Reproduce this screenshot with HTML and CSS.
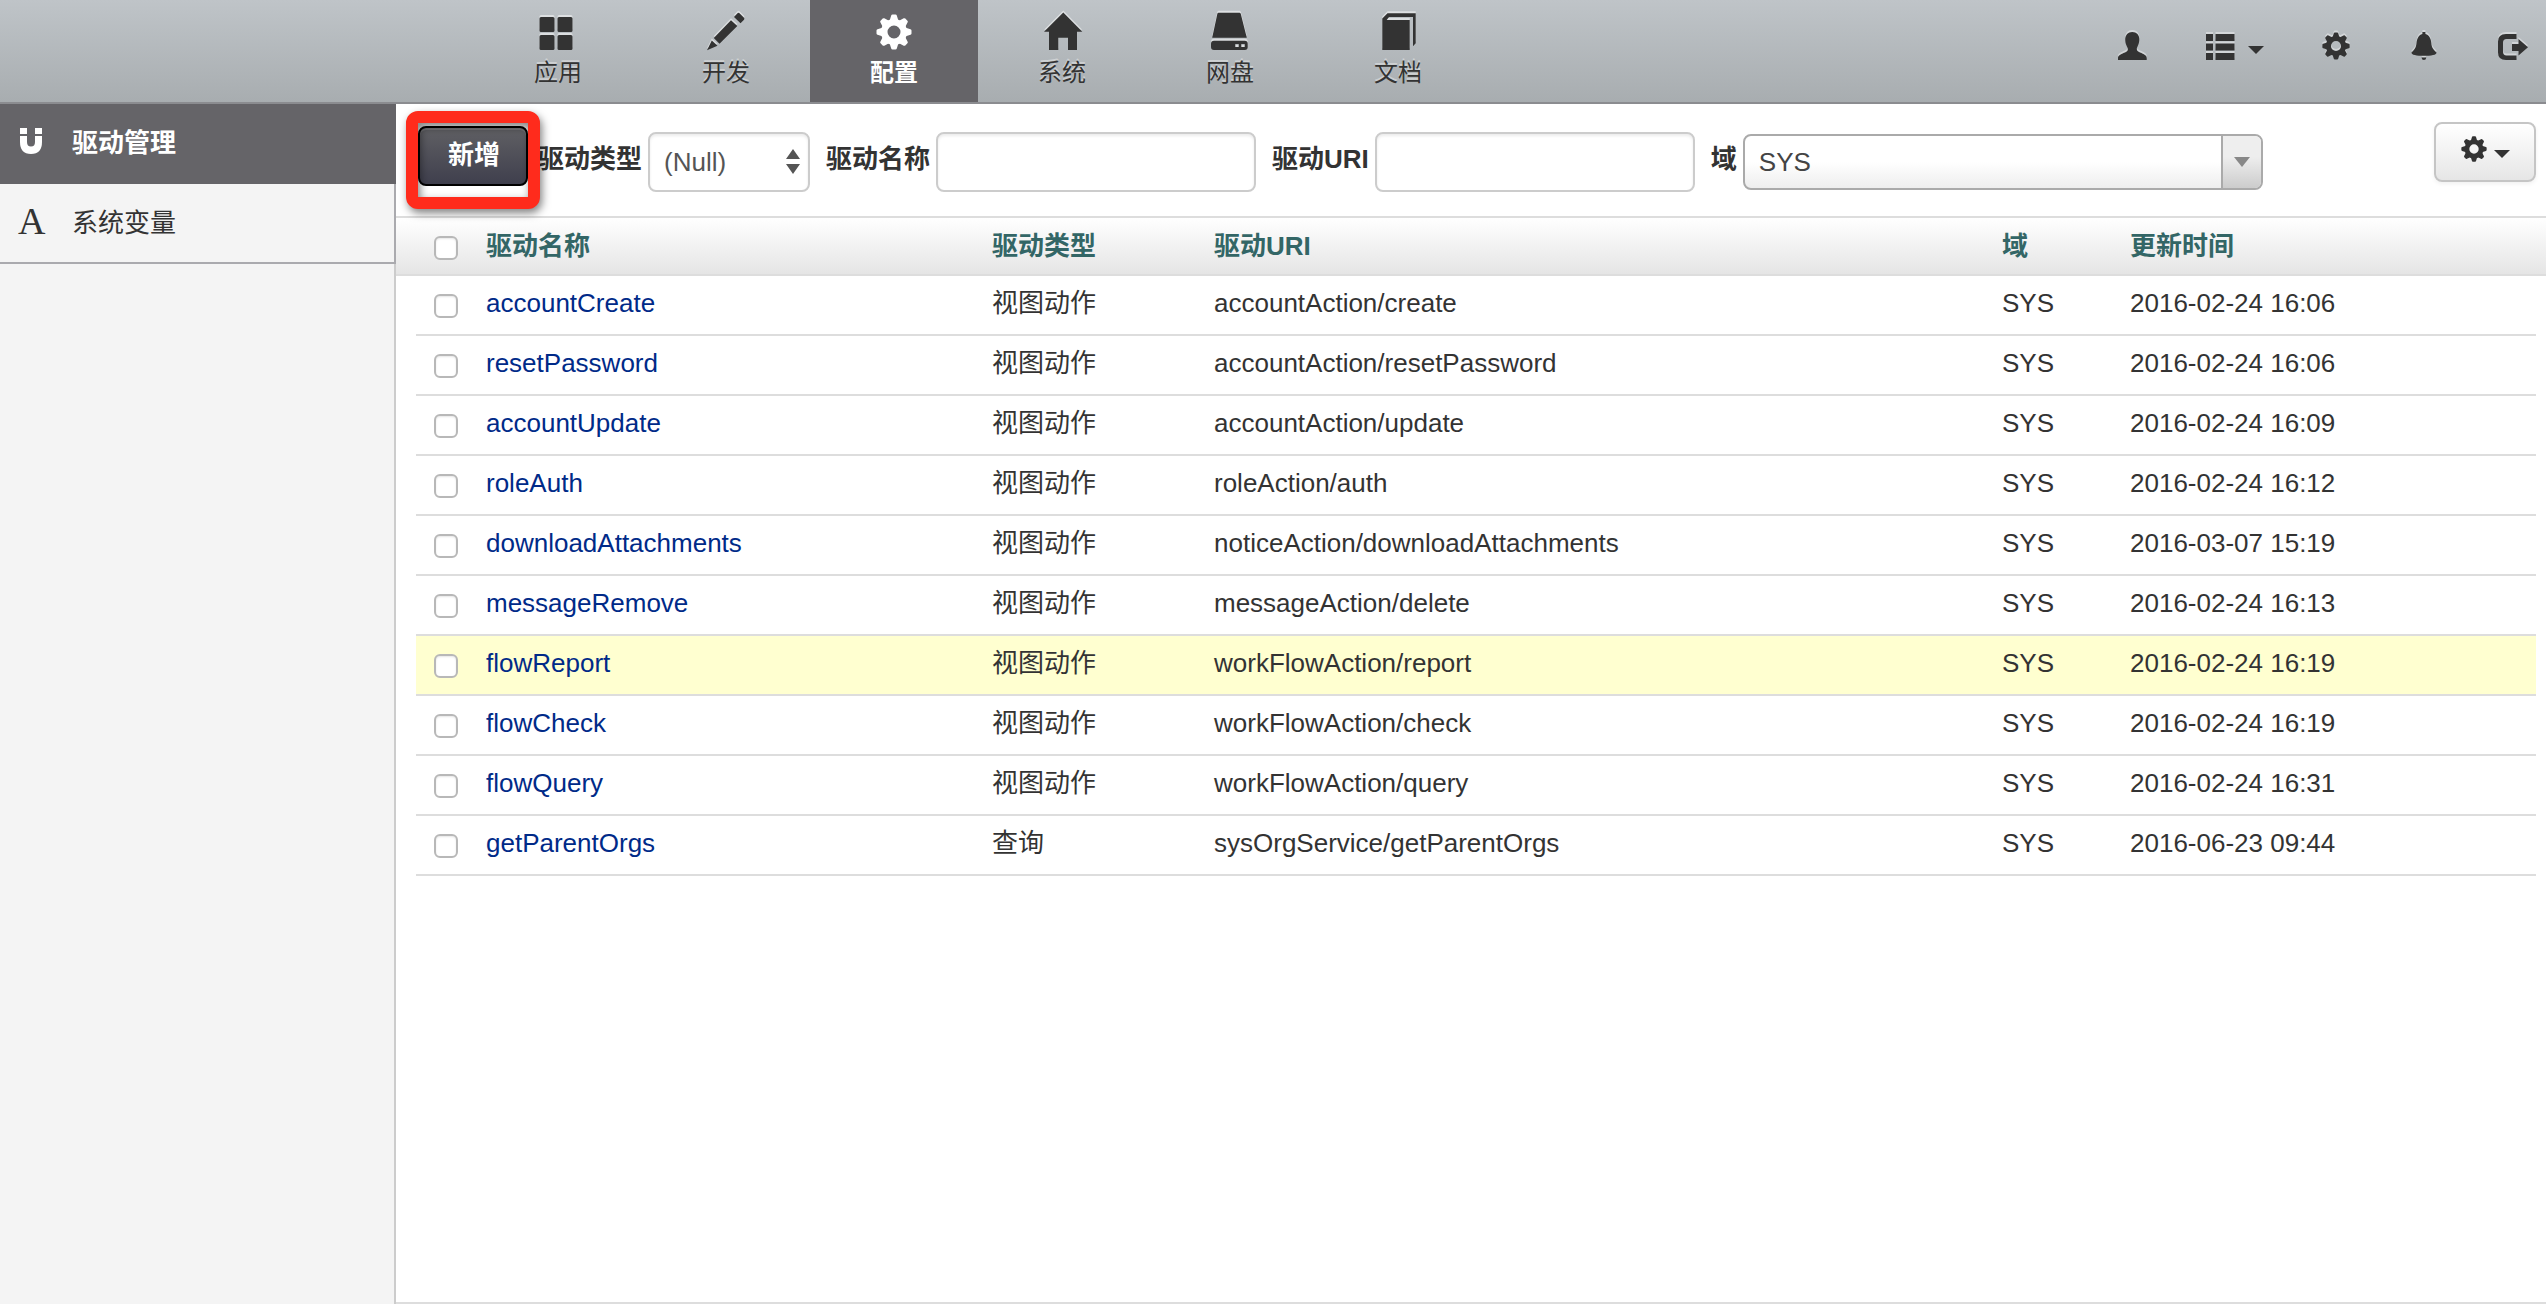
FILE: index.html
```html
<!DOCTYPE html>
<html lang="zh-CN">
<head>
<meta charset="utf-8">
<title>驱动管理</title>
<link rel="stylesheet" href="styles.css">
</head>
<body>
<svg class="sprite" aria-hidden="true">
  <symbol id="cog" viewBox="-18 -18 36 36">
    <g fill="currentColor">
      <path fill-rule="evenodd" d="M0-13A13 13 0 1 1 0 13A13 13 0 1 1 0-13ZM0-6.500A6.500 6.500 0 1 0 0 6.500A6.500 6.500 0 1 0 0-6.500Z"/>
      <g id="teeth">
        <path id="tooth" d="M-4.500-11L-2.800-16.500Q-2.500-17.500-1.500-17.500H1.500Q2.500-17.500 2.800-16.500L4.500-11Z"/>
        <use href="#tooth" transform="rotate(45)"/><use href="#tooth" transform="rotate(90)"/><use href="#tooth" transform="rotate(135)"/>
        <use href="#tooth" transform="rotate(180)"/><use href="#tooth" transform="rotate(225)"/><use href="#tooth" transform="rotate(270)"/><use href="#tooth" transform="rotate(315)"/>
      </g>
    </g>
  </symbol>
</svg>

<header class="topbar">
  <nav class="main-nav">
    <a class="nav-item" href="#"><svg class="nav-icon" viewBox="0 0 40 40"><path d="M3 5h12q1.500 0 1.500 1.500v12q0 1.500-1.500 1.500h-12q-1.500 0-1.500-1.500v-12q0-1.500 1.500-1.500zM21 5h12q1.500 0 1.500 1.500v12q0 1.500-1.500 1.500h-12q-1.500 0-1.500-1.500v-12q0-1.500 1.500-1.500zM3 23h12q1.500 0 1.500 1.500v12q0 1.500-1.500 1.500h-12q-1.500 0-1.500-1.500v-12q0-1.500 1.500-1.500zM21 23h12q1.500 0 1.500 1.500v12q0 1.500-1.500 1.500h-12q-1.500 0-1.500-1.500v-12q0-1.500 1.500-1.500z"/></svg><span>应用</span></a>
    <a class="nav-item" href="#"><svg class="nav-icon" viewBox="0 0 40 40"><path d="M1 38.300L5.800 28.500L11.500 33.800ZM7.800 26L25 8.200L31.300 14L13.500 31.800ZM28 5L31.500 1.300Q32.500.4 33.500 1.300L38 5.700Q38.800 6.700 38 7.700L34.500 11.200Z"/></svg><span>开发</span></a>
    <a class="nav-item active" href="#"><svg class="nav-icon" viewBox="-20 -20 40 40"><use href="#cog" x="-18" y="-18" width="36" height="36"/></svg><span>配置</span></a>
    <a class="nav-item" href="#"><svg class="nav-icon" viewBox="0 0 40 40"><path d="M21.300.5L40.300 19.800H35V38H26V25.800H16.300V38H7V19.800H2Z"/></svg><span>系统</span></a>
    <a class="nav-item" href="#"><svg class="nav-icon" viewBox="0 0 40 40"><path fill-rule="evenodd" d="M8.500.8H29.500Q30.500.8 30.800 2L36.800 25.700H2.200L7.300 2Q7.500.8 8.500.8ZM4 28.700H34.700Q37.700 28.700 37.700 31.700V35Q37.700 38 34.700 38H4Q1 38 1 35V31.700Q1 28.700 4 28.700ZM25.300 32V35H28.700V32ZM31.300 32V35H34.700V32Z"/></svg><span>网盘</span></a>
    <a class="nav-item" href="#"><svg class="nav-icon" viewBox="0 0 40 40"><path d="M4.300 38V6.500L9.500 1.300H37.700V31.300L35 34.300V5H11L8.700 8H31.700V38Z"/></svg><span>文档</span></a>
  </nav>
  <nav class="tools">
    <a href="#" aria-label="用户"><svg class="tool-icon" viewBox="0 0 30 30"><path d="M14.300 1C18.500 1 21.500 4 21.300 8.500C21.200 13 19.500 15 18.800 17.500C18.600 20 20 20.500 22 21.500C26 23 28.700 24.500 28.700 27V29H0V27C0 24.500 3 23 7 21.500C9 20.500 10.200 20 9.800 17.500C9 15 7.200 13 7.200 8.500C7.200 4 10 1 14.300 1Z"/></svg></a>
    <a href="#" aria-label="列表"><svg class="tool-icon" viewBox="0 0 30 30"><path d="M0 3h7v7h-7zM9.500 3h19v7h-19zM0 12.500h7v7h-7zM9.500 12.500h19v7h-19zM0 22h7v7h-7zM9.500 22h19v7h-19z"/></svg><svg class="caret" viewBox="0 0 16 8"><path d="M0 0H16L8 8Z"/></svg></a>
    <a href="#" aria-label="设置"><svg class="tool-icon" viewBox="0 0 30 30"><use href="#cog" x="0" y="1" width="28" height="28"/></svg></a>
    <a href="#" aria-label="通知"><svg class="tool-icon" viewBox="0 0 30 30"><path d="M12.400 1H15.400V3C19.500 4 21 8 21.300 12C21.700 17 23.500 18.500 26.500 21.500C27 24 21 24.800 13.900 24.800C6.800 24.800 1 24 1.500 21.500C4.500 18.500 6 17 6.500 12C7 8 8.300 4 12.400 3ZM11.500 26.500H16.300Q16 29 13.900 29Q11.800 29 11.500 26.500Z"/></svg></a>
    <a href="#" aria-label="退出"><svg class="tool-icon" viewBox="0 0 30 30"><path d="M18.500 3V8H8.500Q5 8 5 11.500V20.500Q5 24.500 8.500 24.500H18.500V29H8Q0 29 0 21.500V10.500Q0 3 8 3ZM14 13H20.500V8L30 16.200L20.500 24.500V20H14Z"/></svg></a>
  </nav>
</header>

<div class="layout">
  <aside class="sidebar">
    <a class="side-item active" href="#"><svg class="side-icon" viewBox="0 0 28 28"><path d="M2 1H9V7H2ZM17 1H24V7H17ZM2 9H9V15Q9 19.500 13 19.500Q17 19.500 17 15V9H24V15Q24 27 13 27Q2 27 2 15Z"/></svg><span class="side-label">驱动管理</span></a>
    <a class="side-item" href="#"><span class="side-icon letter" aria-hidden="true">A</span><span class="side-label">系统变量</span></a>
  </aside>

  <main class="content">
    <form class="toolbar">
      <div class="highlight"><button type="button" class="btn-add">新增</button></div>
      <label for="type">驱动类型</label>
      <div class="select type-select">
        <select id="type"><option>(Null)</option></select>
        <svg viewBox="0 0 14 26"><path d="M0 10L7 0L14 10ZM0 15H14L7 25Z"/></svg>
      </div>
      <label for="name">驱动名称</label>
      <input class="text" id="name" type="text">
      <label for="uri">驱动URI</label>
      <input class="text" id="uri" type="text">
      <label for="domain">域</label>
      <div class="select domain-select">
        <select id="domain"><option>SYS</option></select>
        <span class="drop"><svg viewBox="0 0 16 10"><path d="M0 0H16L8 10Z"/></svg></span>
      </div>
      <button type="button" class="btn-settings" aria-label="设置"><svg class="gear" viewBox="0 0 26 26"><use href="#cog" width="26" height="26"/></svg><svg class="caret" viewBox="0 0 16 8"><path d="M0 0H16L8 8Z"/></svg></button>
    </form>

    <div class="grid">
      <table>
        <colgroup><col class="c-check"><col class="c-name"><col class="c-type"><col><col class="c-domain"><col class="c-time"></colgroup>
        <thead><tr><th><input type="checkbox" aria-label="全选"></th><th>驱动名称</th><th>驱动类型</th><th>驱动URI</th><th>域</th><th>更新时间</th></tr></thead>
        <tbody>
          <tr><td><input type="checkbox" aria-label="accountCreate"></td><td><a href="#">accountCreate</a></td><td>视图动作</td><td>accountAction/create</td><td>SYS</td><td>2016-02-24 16:06</td></tr>
          <tr><td><input type="checkbox" aria-label="resetPassword"></td><td><a href="#">resetPassword</a></td><td>视图动作</td><td>accountAction/resetPassword</td><td>SYS</td><td>2016-02-24 16:06</td></tr>
          <tr><td><input type="checkbox" aria-label="accountUpdate"></td><td><a href="#">accountUpdate</a></td><td>视图动作</td><td>accountAction/update</td><td>SYS</td><td>2016-02-24 16:09</td></tr>
          <tr><td><input type="checkbox" aria-label="roleAuth"></td><td><a href="#">roleAuth</a></td><td>视图动作</td><td>roleAction/auth</td><td>SYS</td><td>2016-02-24 16:12</td></tr>
          <tr><td><input type="checkbox" aria-label="downloadAttachments"></td><td><a href="#">downloadAttachments</a></td><td>视图动作</td><td>noticeAction/downloadAttachments</td><td>SYS</td><td>2016-03-07 15:19</td></tr>
          <tr><td><input type="checkbox" aria-label="messageRemove"></td><td><a href="#">messageRemove</a></td><td>视图动作</td><td>messageAction/delete</td><td>SYS</td><td>2016-02-24 16:13</td></tr>
          <tr class="hover"><td><input type="checkbox" aria-label="flowReport"></td><td><a href="#">flowReport</a></td><td>视图动作</td><td>workFlowAction/report</td><td>SYS</td><td>2016-02-24 16:19</td></tr>
          <tr><td><input type="checkbox" aria-label="flowCheck"></td><td><a href="#">flowCheck</a></td><td>视图动作</td><td>workFlowAction/check</td><td>SYS</td><td>2016-02-24 16:19</td></tr>
          <tr><td><input type="checkbox" aria-label="flowQuery"></td><td><a href="#">flowQuery</a></td><td>视图动作</td><td>workFlowAction/query</td><td>SYS</td><td>2016-02-24 16:31</td></tr>
          <tr><td><input type="checkbox" aria-label="getParentOrgs"></td><td><a href="#">getParentOrgs</a></td><td>查询</td><td>sysOrgService/getParentOrgs</td><td>SYS</td><td>2016-06-23 09:44</td></tr>
        </tbody>
      </table>
    </div>
  </main>
</div>
</body>
</html>
```
FILE: styles.css
```css
* { box-sizing: border-box; }

body {
  margin: 0;
  min-height: 100vh;
  display: flex;
  flex-direction: column;
  background: #fff;
  color: #333;
  font: 26px/40px "Liberation Sans", "Noto Sans CJK SC", sans-serif;
}

a { color: inherit; text-decoration: none; }
button, input, select { font: inherit; color: inherit; margin: 0; }
svg { display: block; fill: currentColor; overflow: visible; flex: none; }
.sprite { width: 0; height: 0; position: absolute; }

/* Top bar */
.topbar {
  display: flex;
  justify-content: space-between;
  height: 104px;
  padding: 0 18px 0 474px;
  border-bottom: 2px solid #8b8c90;
  background: linear-gradient(#bfc4c8, #a8adb0);
}
.main-nav { display: flex; }
.nav-item {
  width: 168px;
  padding-top: 12px;
  display: flex;
  flex-direction: column;
  align-items: center;
  gap: 2px;
  font-size: 24px;
  line-height: 38px;
  text-shadow: 0 -2px 0 rgba(255, 255, 255, .4);
}
.nav-icon { width: 40px; height: 40px; filter: drop-shadow(0 -2px 0 rgba(255, 255, 255, .5)); }
.nav-item.active { background: #656468; color: #fff; font-weight: bold; text-shadow: none; }
.nav-item.active .nav-icon { filter: none; }
.tools { display: flex; align-items: center; gap: 58px; padding-bottom: 10px; }
.tools a { display: flex; align-items: center; gap: 12px; }
.tool-icon { width: 30px; height: 30px; filter: drop-shadow(0 -2px 0 rgba(255, 255, 255, .4)); }
.caret { width: 16px; height: 8px; }
.tools .caret { margin-top: 8px; }

/* Frame */
.layout { flex: 1; display: flex; }
.sidebar { width: 396px; flex: none; background: #f4f4f4; border-right: 2px solid #ccc; }
.side-item {
  display: flex;
  align-items: center;
  gap: 26px;
  height: 80px;
  margin-right: -2px;
  padding: 0 18px 4px;
  border-right: 2px solid #aaaaae;
  border-bottom: 2px solid #aaaaae;
}
.side-item.active { background: #656468; border-color: #656468; color: #fff; font-weight: bold; }
.side-icon { width: 28px; height: 28px; }
.side-label { padding-top: 4px; }
.letter { font: 38px/28px "Liberation Serif", serif; }
.content { flex: 1; min-width: 0; border-bottom: 2px solid #ddd; }

/* Toolbar */
.toolbar { display: flex; align-items: flex-start; padding: 28px 10px 24px 22px; }
.toolbar label { font-weight: bold; line-height: 54px; margin-right: 6px; }
.highlight { position: relative; margin: -6px 10px 0 0; }
.highlight::after {
  content: "";
  position: absolute;
  inset: -15px -12px -23px;
  border: 12px solid #ff2b1c;
  border-radius: 12px;
  filter: drop-shadow(2px 4px 4px rgba(0, 0, 0, .5));
  pointer-events: none;
}
.btn-add {
  display: block;
  width: 110px;
  height: 60px;
  padding: 0 0 2px 2px;
  border: 2px solid #000;
  border-radius: 8px;
  background: linear-gradient(#606064, #3f3f4d);
  box-shadow: inset 0 2px 0 rgba(255, 255, 255, .15);
  color: #fff;
  font-weight: bold;
}
.text {
  width: 320px;
  height: 60px;
  padding: 8px 16px;
  border: 2px solid #ccc;
  border-radius: 8px;
  box-shadow: inset 0 2px 3px rgba(0, 0, 0, .08);
  background: #fff;
  margin-right: 16px;
}
.select { display: grid; align-items: center; margin-right: 16px; }
.select > * { grid-area: 1 / 1; }
.select select { width: 100%; height: 100%; appearance: none; border-radius: 8px; padding: 0 14px; }
.type-select { width: 162px; height: 60px; color: #555; }
.type-select select { border: 2px solid #ccc; background: #fff; box-shadow: inset 0 2px 3px rgba(0, 0, 0, .08); }
.type-select svg { width: 14px; height: 26px; justify-self: end; margin-right: 10px; pointer-events: none; }
.domain-select { width: 520px; height: 56px; margin-top: 2px; color: #444; }
.domain-select select { border: 2px solid #aaa; background: linear-gradient(#fff 50%, #eee); }
.drop {
  justify-self: end;
  width: 40px;
  height: 52px;
  margin-right: 2px;
  display: grid;
  place-items: center;
  border-left: 2px solid #aaa;
  border-radius: 0 6px 6px 0;
  background: linear-gradient(#eee 40%, #ccc);
  color: #888;
  pointer-events: none;
}
.drop svg { width: 16px; height: 10px; }
.btn-settings {
  display: flex;
  align-items: center;
  justify-content: center;
  gap: 7px;
  width: 102px;
  height: 60px;
  margin: -10px 0 0 auto;
  padding: 0 0 6px;
  border: 2px solid #c5c5c5;
  border-radius: 8px;
  background: linear-gradient(#fff, #e6e6e6);
  box-shadow: 0 2px 4px rgba(0, 0, 0, .06);
}
.gear { width: 26px; height: 26px; }
.btn-settings .caret { margin-top: 10px; }

/* Data grid */
.grid {
  padding: 0 10px 0 20px;
  border-top: 2px solid #ddd;
  background: linear-gradient(#fff, #e5e5e5 56px, #ddd 56px, #ddd 58px, #fff 58px) no-repeat;
}
table { width: 100%; table-layout: fixed; border-collapse: separate; border-spacing: 0; }
.c-check { width: 60px; }
.c-name { width: 506px; }
.c-type { width: 222px; }
.c-domain { width: 128px; }
.c-time { width: 416px; }
th, td { height: 60px; padding: 0 10px 4px; text-align: left; }
th { height: 58px; padding-bottom: 2px; color: #366; }
td { border-bottom: 2px solid #ddd; }
th:first-child, td:first-child { padding: 0 18px; }
.hover td { background: #ffffd0; }
td a { color: #002a88; }
input[type="checkbox"] {
  display: block;
  width: 24px;
  height: 24px;
  margin-top: 2px;
  appearance: none;
  border: 2px solid #b8b8b8;
  border-radius: 6px;
  background: #fff;
  box-shadow: inset 0 1px 2px rgba(0, 0, 0, .1);
}
```
